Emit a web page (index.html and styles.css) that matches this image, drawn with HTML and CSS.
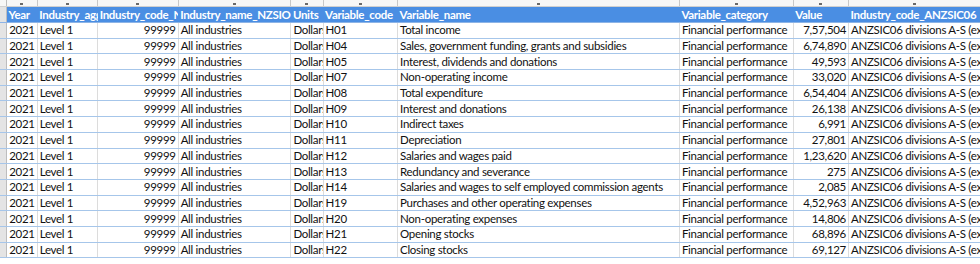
FILE: index.html
```html
<!DOCTYPE html>
<html lang="en">
<head>
  <meta charset="UTF-8">
  <title>Sheet</title>
  <link rel="stylesheet" href="styles.css">
</head>
<body>
<table class="sheet">
  <colgroup>
    <col class="c-edge">
    <col style="width:31px">
    <col style="width:60px">
    <col style="width:80px">
    <col style="width:112px">
    <col style="width:32px">
    <col style="width:74px">
    <col style="width:280px">
    <col style="width:113px">
    <col style="width:55px">
    <col style="width:132px">
    <col style="width:10px">
  </colgroup>
  <tr class="letters">
    <td class="edge"></td>
    <td><i></i></td><td><i></i></td><td><i></i></td><td><i></i></td><td><i></i></td>
    <td><i></i></td><td><i></i></td><td><i></i></td><td><i></i></td><td><i></i></td><td></td>
  </tr>
  <tr class="head">
    <td class="edge"></td>
    <td>Year</td>
    <td>Industry_aggregation_NZSIOC</td>
    <td>Industry_code_NZSIOC</td>
    <td>Industry_name_NZSIOC</td>
    <td>Units</td>
    <td>Variable_code</td>
    <td>Variable_name</td>
    <td>Variable_category</td>
    <td>Value</td>
    <td>Industry_code_ANZSIC06</td>
    <td class="blank"></td>
  </tr>
</table>
<script>
  const rows = [
    ['H01', 'Total income', '7,57,504'],
    ['H04', 'Sales, government funding, grants and subsidies', '6,74,890'],
    ['H05', 'Interest, dividends and donations', '49,593'],
    ['H07', 'Non-operating income', '33,020'],
    ['H08', 'Total expenditure', '6,54,404'],
    ['H09', 'Interest and donations', '26,138'],
    ['H10', 'Indirect taxes', '6,991'],
    ['H11', 'Depreciation', '27,801'],
    ['H12', 'Salaries and wages paid', '1,23,620'],
    ['H13', 'Redundancy and severance', '275'],
    ['H14', 'Salaries and wages to self employed commission agents', '2,085'],
    ['H19', 'Purchases and other operating expenses', '4,52,963'],
    ['H20', 'Non-operating expenses', '14,806'],
    ['H21', 'Opening stocks', '68,896'],
    ['H22', 'Closing stocks', '69,127'],
  ];

  const table = document.querySelector('.sheet');

  rows.forEach(r => {
    const tr = document.createElement('tr');
    tr.className = 'row';
    tr.innerHTML =
      '<td class="edge"></td>' +
      '<td class="num">2021</td>' +
      '<td>Level 1</td>' +
      '<td class="num">99999</td>' +
      '<td>All industries</td>' +
      '<td>Dollars</td>' +
      `<td>${r[0]}</td>` +
      `<td>${r[1]}</td>` +
      '<td>Financial performance</td>' +
      `<td class="num">${r[2]}</td>` +
      '<td>ANZSIC06 divisions A-S (excluding classes K6330, L6711, O7552, O760, O771, O772, S9540, S9601, S9602, and S9603)</td>' +
      '<td class="blank"></td>';
    table.appendChild(tr);
  });
</script>
</body>
</html>
```

FILE: styles.css
```css
body {
  margin: 0;
  background: #fff;
  font-family: Lato, "Open Sans", sans-serif;
  font-size: 11.5px;
  letter-spacing: -0.3px;
  color: #111;
}

.sheet {
  border-collapse: collapse;
  table-layout: fixed;
  width: 992px;
}

.c-edge { width: 6px; }

.sheet td {
  padding: 0 2px;
  white-space: nowrap;
  overflow: hidden;
  border-right: 1px solid #dcdcdc;
  line-height: 14px;
}

.edge {
  background: #e4e4e4;
  border-right: 1px solid #bdbdbd !important;
}

.letters td {
  height: 6px;
  padding: 0;
  background: #f7f7f7;
  border-bottom: 1px solid #d0d0d0;
  border-right: 1px solid #c8c8c8;
}

.letters i {
  display: block;
  width: 3px;
  height: 2px;
  margin: 1px auto 0;
  background: #6a6a6a;
}

.head td {
  height: 15px;
  background: #4a8ee3;
  color: #fff;
  font-weight: bold;
  border-right: none;
  border-bottom: 1px solid #8db4e6;
}

.head .blank {
  background: #fff;
}

.head .edge {
  background: #e4e4e4;
}

.row td {
  height: 14.7px;
  border-bottom: 1px solid #a6c6ea;
}

.row .blank {
  border-bottom: 1px solid #e2e2e2;
}

.num { text-align: right; }
```
